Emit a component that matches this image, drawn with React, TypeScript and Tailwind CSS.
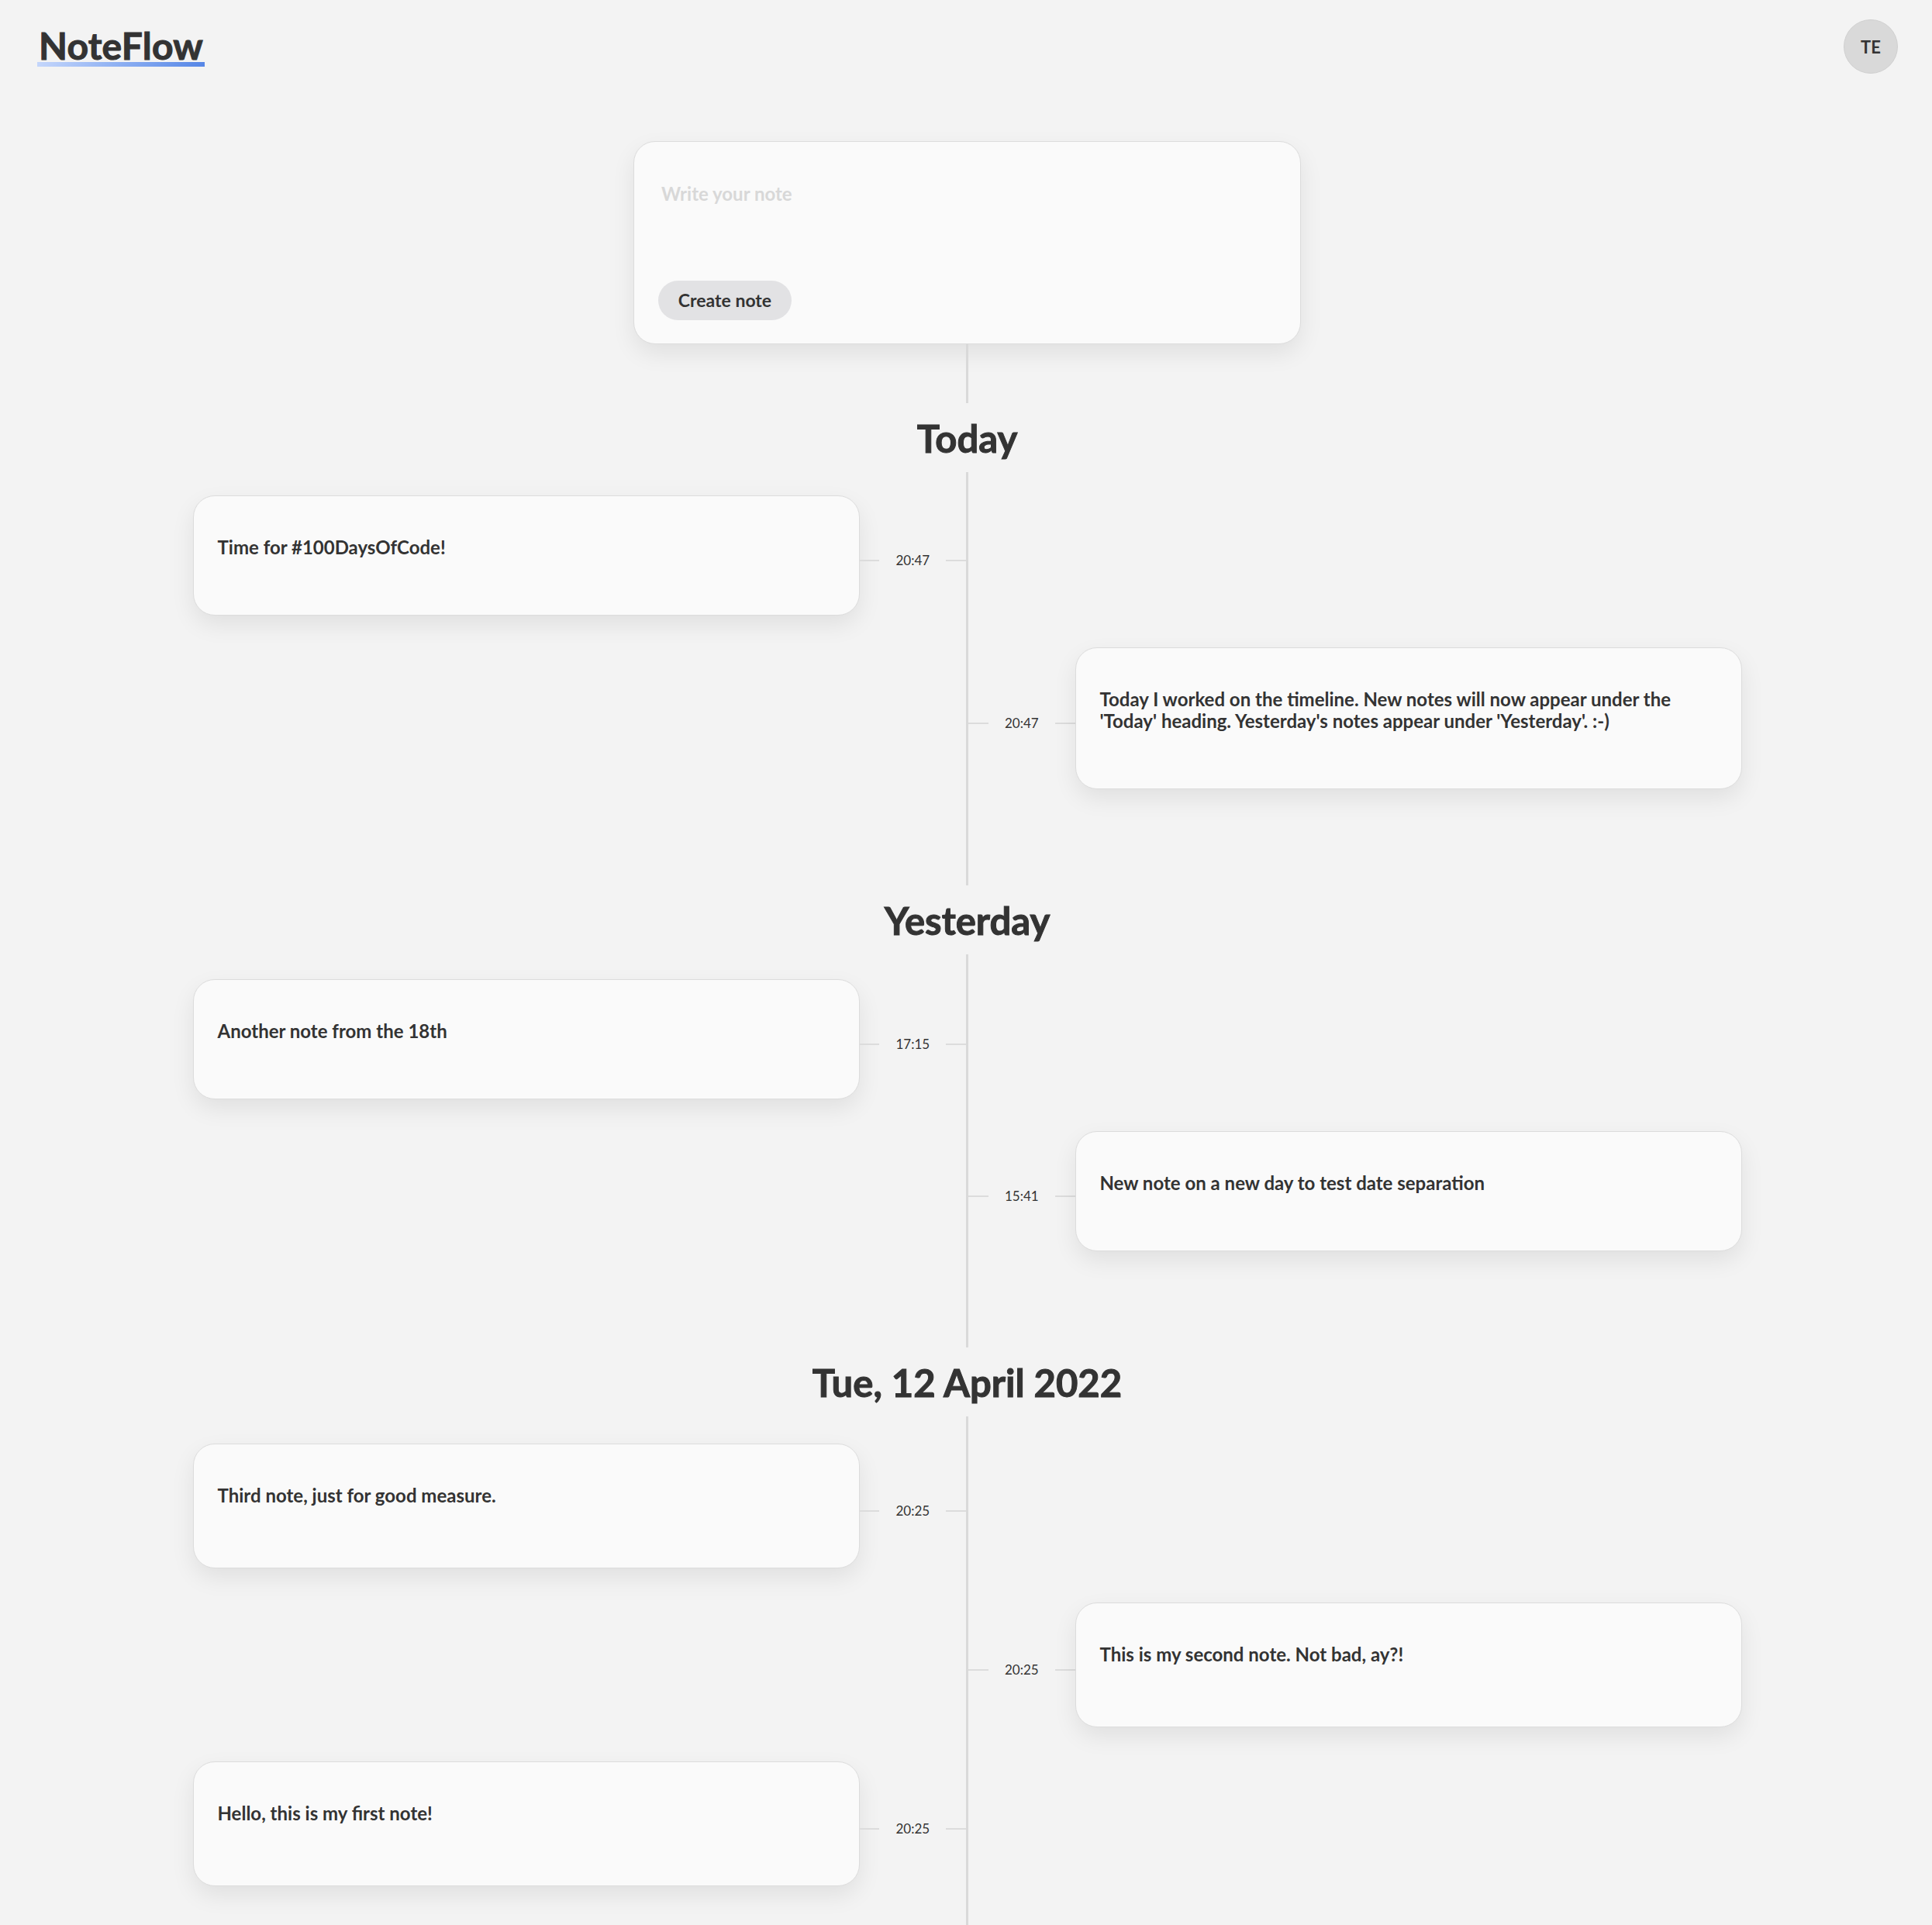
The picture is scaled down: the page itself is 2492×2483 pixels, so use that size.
import React from 'react';

interface Note {
  id: number;
  text: string;
  time: string;
  side: 'left' | 'right';
}

interface Day {
  label: string;
  notes: Note[];
  bodyClass: string;
  tall?: boolean;
}

const days: Day[] = [
  {
    label: 'Today',
    bodyClass: 'gap-[41px] pt-[30px]',
    notes: [
      { id: 1, text: 'Time for #100DaysOfCode!', time: '20:47', side: 'left' },
      {
        id: 2,
        text: "Today I worked on the timeline. New notes will now appear under the 'Today' heading. Yesterday's notes appear under 'Yesterday'. :-)",
        time: '20:47',
        side: 'right',
      },
    ],
  },
  {
    label: 'Yesterday',
    bodyClass: 'gap-[41px] pt-[32px]',
    notes: [
      { id: 3, text: 'Another note from the 18th', time: '17:15', side: 'left' },
      { id: 4, text: 'New note on a new day to test date separation', time: '15:41', side: 'right' },
    ],
  },
  {
    label: 'Tue, 12 April 2022',
    bodyClass: 'gap-[44px] pt-[35px]',
    tall: true,
    notes: [
      { id: 5, text: 'Third note, just for good measure.', time: '20:25', side: 'left' },
      { id: 6, text: 'This is my second note. Not bad, ay?!', time: '20:25', side: 'right' },
      { id: 7, text: 'Hello, this is my first note!', time: '20:25', side: 'left' },
    ],
  },
];

const TimeLink: React.FC<{ time: string }> = ({ time }) => (
  <div className="flex flex-1 items-center pt-[12px]">
    <div className="h-[2px] flex-1 bg-[#dcdcdc]" />
    <span className="mx-[21px] text-[17px] leading-none text-[#333]">{time}</span>
    <div className="h-[2px] flex-1 bg-[#dcdcdc]" />
  </div>
);

const NoteCard: React.FC<{ text: string; tall?: boolean }> = ({ text, tall }) => (
  <div
    className={`w-[860px] shrink-0 rounded-[28px] border border-[#dcdcdc] bg-[#fafafa] px-[31px] pt-[52px] shadow-[0_12px_30px_rgba(0,0,0,0.08)] ${
      tall ? 'pb-[79px]' : 'pb-[73px]'
    }`}
  >
    <p className="text-[24px] font-bold leading-[28px] text-[#333]">{text}</p>
  </div>
);

export default function App() {
  return (
    <div className="min-h-screen bg-[#f3f3f3] font-['Lato',sans-serif] text-[#333]">
      {/* Header */}
      <header className="flex items-start justify-between pl-[48px] pr-[44px] pt-[25px]">
        <div className="mt-[10px] inline-block">
          <div className="px-[2px] text-[48px] font-bold leading-[47px] tracking-[0.2px] text-[#333] [-webkit-text-stroke:1px_#333]">
            NoteFlow
          </div>
          <div className="-mt-[2px] h-[6px] w-full bg-gradient-to-r from-[#c4d6fb] to-[#5686e6]" />
        </div>
        <div className="flex h-[70px] w-[70px] items-center justify-center rounded-full border border-[#d0d0d0] bg-[#d9d9d9] text-[22px] font-bold text-[#333]">
          TE
        </div>
      </header>

      <main className="pl-[3px] pb-[200px]">
        {/* Composer */}
        <div className="mx-auto mt-[87px] w-[861px] rounded-[28px] border border-[#dcdcdc] bg-[#fafafa] px-[31px] pb-[30px] pt-[31px] shadow-[0_12px_30px_rgba(0,0,0,0.08)]">
          <textarea
            placeholder="Write your note"
            className="block h-[136px] w-full resize-none bg-transparent px-[4px] pt-[18px] text-[24px] font-bold leading-[36px] text-[#333] outline-none placeholder:text-[#d8d8d8]"
          />
          <button className="mt-[12px] h-[51px] w-[172px] rounded-full bg-[#e2e2e4] text-[23px] font-bold text-[#333]">
            Create note
          </button>
        </div>

        <div className="mx-auto h-[76px] w-[3px] bg-[#d9d9d9]" />

        {days.map((day) => (
          <section key={day.label}>
            <h2 className="pb-[20px] pt-[21px] text-center text-[49px] font-bold leading-[48px] text-[#333] [-webkit-text-stroke:1px_#333]">
              {day.label}
            </h2>
            <div
              className={`mx-auto flex w-[1998px] flex-col bg-[linear-gradient(#d9d9d9,#d9d9d9)] bg-[length:3px_100%] bg-top bg-no-repeat pb-[124px] ${day.bodyClass}`}
            >
              {day.notes.map((note) => (
                <div key={note.id} className="grid grid-cols-[1fr_3px_1fr]">
                  {note.side === 'left' ? (
                    <>
                      <div className="flex items-center">
                        <NoteCard text={note.text} tall={day.tall} />
                        <TimeLink time={note.time} />
                      </div>
                      <div />
                      <div />
                    </>
                  ) : (
                    <>
                      <div />
                      <div />
                      <div className="flex items-center">
                        <TimeLink time={note.time} />
                        <NoteCard text={note.text} tall={day.tall} />
                      </div>
                    </>
                  )}
                </div>
              ))}
            </div>
          </section>
        ))}
      </main>
    </div>
  );
}
